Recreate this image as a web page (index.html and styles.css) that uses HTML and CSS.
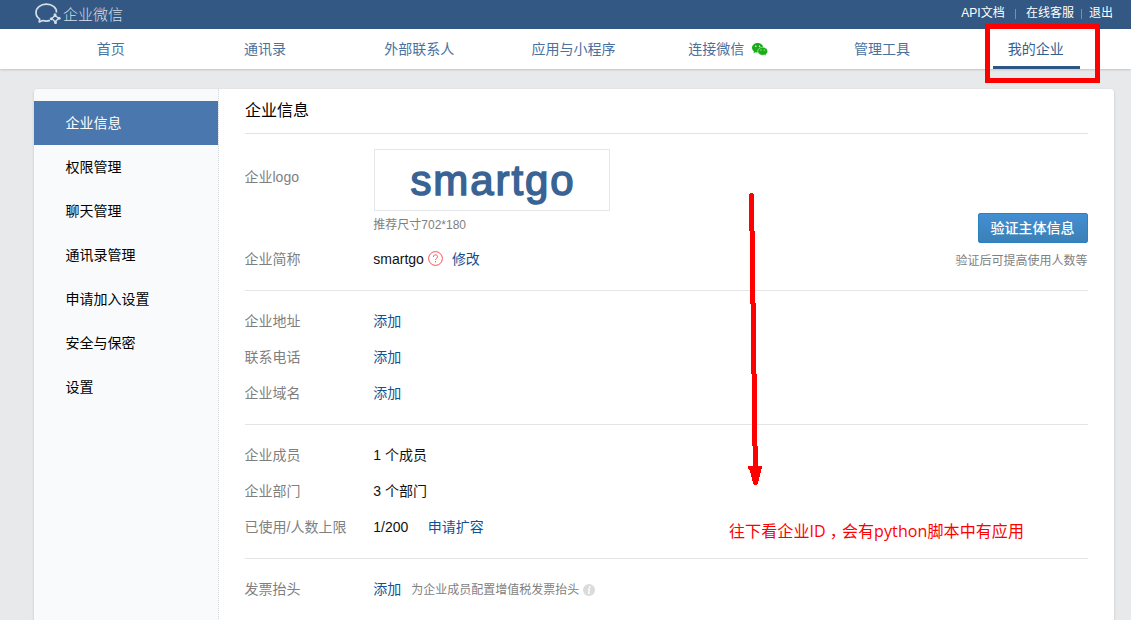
FILE: index.html
```html
<!DOCTYPE html>
<html lang="zh-CN">
<head>
<meta charset="utf-8">
<title>企业微信</title>
<link rel="stylesheet" href="styles.css">
</head>
<body>
<header class="topbar">
  <div class="wrap topbar-inner">
    <div class="brand">
      <svg class="brand-mark" width="26" height="22" viewBox="0 0 26 22" fill="none" stroke="#d3dfeb" stroke-width="1.700" stroke-linejoin="round">
        <path d="M21.300 9.500C22 5.200 17.500 1.100 11.400 1.100C5.500 1.100 1 4.800 1 9.500C1 12.300 2.400 14.600 4.700 16.100L4.200 19L7.800 17.500C10 18.200 12.500 18.200 15 17.400"/>
        <path stroke-width="1.300" d="M20.200 12.200L23.500 15.500L20.200 18.800L16.900 15.500Z"/>
        <g fill="#d3dfeb" stroke="none">
          <circle cx="20" cy="11.800" r="1.500"/><circle cx="24.100" cy="15.300" r="1.500"/><circle cx="20.500" cy="19.400" r="1.500"/><circle cx="16.400" cy="15.800" r="1.500"/>
        </g>
      </svg>
      <span class="brand-name">企业微信</span>
    </div>
    <div class="links"><a>API文档</a><i class="sep sep-wide"></i><a>在线客服</a><i class="sep"></i><a>退出</a></div>
  </div>
</header>
<nav class="nav">
  <div class="wrap nav-inner">
    <a class="nav-item">首页</a>
    <a class="nav-item">通讯录</a>
    <a class="nav-item">外部联系人</a>
    <a class="nav-item">应用与小程序</a>
    <a class="nav-item">连接微信
      <svg class="wechat" width="16" height="13" viewBox="0 0 16 13">
        <path fill="#1aad19" d="M5.700 0C2.600 0 0 2.100 0 4.800c0 1.500.8 2.800 2 3.700l-.5 1.800 2.100-1.100c.7.200 1.400.3 2.100.3C8.800 9.500 11.400 7.400 11.400 4.800S8.800 0 5.700 0z"/>
        <path fill="#1aad19" stroke="#fff" stroke-width=".5" d="M10.700 4.200c2.800 0 5 1.800 5 4.100 0 1.300-.7 2.300-1.800 3.100l.4 1.400-1.700-.8c-.6.200-1.200.3-1.900.3-2.700 0-5-1.800-5-4s2.300-4.100 5-4.100z"/>
        <g fill="#fff"><circle cx="3.800" cy="3.300" r=".7"/><circle cx="7.600" cy="3.300" r=".7"/><circle cx="9" cy="7" r=".6"/><circle cx="12.300" cy="7" r=".6"/></g>
      </svg>
    </a>
    <a class="nav-item">管理工具</a>
    <a class="nav-item"><span class="current">我的企业</span></a>
  </div>
</nav>
<div class="wrap panel">
  <aside class="side">
    <a class="side-item active">企业信息</a>
    <a class="side-item">权限管理</a>
    <a class="side-item">聊天管理</a>
    <a class="side-item">通讯录管理</a>
    <a class="side-item">申请加入设置</a>
    <a class="side-item">安全与保密</a>
    <a class="side-item">设置</a>
  </aside>
  <main class="main">
    <h1 class="title">企业信息</h1>
    <section class="section intro">
      <div>
        <div class="row logo-row">
          <span class="label">企业logo</span>
          <div>
            <div class="logo-box"><span class="logo-text">smartgo</span></div>
            <div class="hint">推荐尺寸702*180</div>
          </div>
        </div>
        <div class="row">
          <span class="label">企业简称</span><span>smartgo</span>
          <svg class="help" width="15" height="15" viewBox="0 0 15 15" fill="none" stroke="#fa5151">
            <circle cx="7.500" cy="7.500" r="6.900"/>
            <path d="M5.400 5.900c0-2.800 4.200-2.700 4.200-.2 0 1.500-2.100 1.500-2.100 3.200M7.500 10.100v1.200"/>
          </svg>
          <a class="link">修改</a>
        </div>
      </div>
      <div class="verify"><button class="btn">验证主体信息</button><span class="verify-note">验证后可提高使用人数等</span></div>
    </section>
    <section class="section">
      <div class="row"><span class="label">企业地址</span><a class="link">添加</a></div>
      <div class="row"><span class="label">联系电话</span><a class="link">添加</a></div>
      <div class="row"><span class="label">企业域名</span><a class="link">添加</a></div>
    </section>
    <section class="section">
      <div class="row"><span class="label">企业成员</span><span>1 个成员</span></div>
      <div class="row"><span class="label">企业部门</span><span>3 个部门</span></div>
      <div class="row"><span class="label">已使用/人数上限</span><span>1/200</span><a class="link expand">申请扩容</a></div>
    </section>
    <section class="section last">
      <div class="row"><span class="label">发票抬头</span><a class="link">添加</a><span class="invoice-note">为企业成员配置增值税发票抬头</span>
        <svg class="info" width="12" height="12" viewBox="0 0 12 12"><circle cx="6" cy="6" r="6" fill="#d9dbdd"/><circle cx="6.700" cy="3" r=".9" fill="#fff"/><path d="M4.900 5.200h1.500l-.8 4h1.200" fill="none" stroke="#fff" stroke-width="1.200"/></svg>
      </div>
    </section>
  </main>
</div>
<div class="mark-box"></div>
<svg class="mark-arrow" width="14" height="292" viewBox="0 0 14 292" fill="#f00" shape-rendering="crispEdges">
  <path d="M2 0h3v1h1v37h-5v-37h1z"/>
  <path d="M2 38h5v73h-5zM3 110h5v71h-5zM4 181h5v72h-5zM5 253h5v20h-5z"/>
  <path d="M0 273h14v3h-1v4h-1v4h-1v4h-1v3h-1v1h-3v-1h-1v-3h-1v-4h-1v-4h-1v-3h-1v-1h-1z"/>
</svg>
<div class="mark-note">往下看企业ID<span class="comma">，</span>会有python脚本中有应用</div>
</body>
</html>
```
FILE: styles.css
```css
* { box-sizing: border-box; }
body {
  margin: 0;
  height: 620px;
  overflow: hidden;
  background: #e7e9eb;
  color: #111;
  font: 14px/36px "Liberation Sans", "Noto Sans CJK SC", sans-serif;
}
.wrap { width: 1080px; margin-left: 34px; }

.topbar { height: 29px; background: #335883; }
.topbar-inner { display: flex; justify-content: space-between; height: 29px; }
.brand { display: flex; align-items: flex-start; padding: 3px 0 0 1px; }
.brand-name {
  margin-left: 2px;
  color: #d3dfeb;
  font-size: 15px;
  font-weight: 300;
  line-height: 23px;
}
.links { display: flex; align-items: center; color: #fff; font-size: 12px; line-height: 26px; padding-bottom: 3px; }
.sep { width: 1px; height: 10px; margin: 1px 7px 0 7px; background: #7690ae; }
.sep-wide { margin: 1px 10px 0; }
.links a:first-child { letter-spacing: .1px; }
.links a:last-child { margin-right: 1px; }

.nav { height: 40px; background: #fff; box-shadow: 0 1px 2px rgba(0, 0, 0, .16); position: relative; }
.nav-inner { display: grid; grid-template-columns: repeat(7, 1fr); }
.nav-item { display: flex; justify-content: center; height: 40px; padding-right: 1px; color: #49719f; line-height: 41px; }
.wechat { margin: 14px -1px 0 8px; }
.current { width: 87px; height: 40px; padding-right: 1px; text-align: center; color: #335f94; border-bottom: 3px solid #2c5685; }

.panel {
  display: flex;
  height: 560px;
  margin-top: 20px;
  background: #fff;
  border-radius: 4px;
  box-shadow: 0 1px 3px rgba(0, 0, 0, .16);
}
.side { width: 185px; padding-top: 12px; background: #f9fafc; border-right: 1px dotted #d3d6da; border-radius: 4px 0 0; }
.side-item { display: block; height: 44px; padding-left: 31.500px; color: #000; line-height: 45px; }
.active { background: #4a77ad; color: #fff; }

.main { width: 869px; padding-left: 26px; }
.title { height: 45px; margin: 0; border-bottom: 1px solid #e2e3e5; font-size: 16px; font-weight: 400; line-height: 44px; color: #000; }
.section { padding: 12px 0 13px; border-bottom: 1px solid #e4e5e8; }
.intro { display: flex; justify-content: space-between; padding-top: 15px; }
.last { border: 0; }
.row { display: flex; align-items: center; height: 36px; white-space: nowrap; }
.label { width: 128.800px; margin-left: -.5px; color: #7f7f7f; }
.link { color: #115293; }
.logo-row { align-items: flex-start; height: 92px; }
.logo-row .label { line-height: 56px; }
.logo-box { width: 236px; height: 62px; margin-left: .7px; border: 1px solid #e4e6e9; display: flex; justify-content: center; }
.logo-text {
  margin-left: 2px;
  font: 42px/62px "Liberation Sans", Arial, sans-serif;
  color: #386394;
  letter-spacing: 1.900px;
  -webkit-text-stroke: 1.500px #386394;
}
.hint { color: #7f7f7f; font-size: 12px; line-height: 29px; }
.help { margin: 0 9px 1px 4px; }
.verify { display: flex; flex-direction: column; align-items: flex-end; height: 128px; padding-top: 64px; }
.btn {
  flex: none;
  width: 110px;
  height: 30px;
  padding: 0 1px 0 0;
  border: 1px solid #2a82c4;
  border-radius: 2px;
  background: linear-gradient(#438fd3, #3b80b6);
  color: #fff;
  font: 500 14px/27px "Liberation Sans", "Noto Sans CJK SC", sans-serif;
}
.verify-note { margin-right: .5px; color: #7f7f7f; font-size: 12px; line-height: 36px; }
.expand { margin-left: 19.500px; }
.invoice-note { margin: 1px 4px 0 10px; color: #7f7f7f; font-size: 12px; }
.info { margin-top: 1px; }

/* Annotations lying over the page */
.mark-box { position: absolute; left: 985px; top: 24px; width: 115px; height: 59px; border: 5px solid #f00; }
.mark-arrow { position: absolute; left: 748px; top: 193px; }
.mark-note {
  position: absolute;
  left: 729px;
  top: 519px;
  color: #f00;
  font: 16px/24px "Open Sans", "Noto Sans CJK SC", sans-serif;
  letter-spacing: .1px;
  white-space: nowrap;
}
.comma { padding: 0 4px; font-feature-settings: "halt"; }
```
